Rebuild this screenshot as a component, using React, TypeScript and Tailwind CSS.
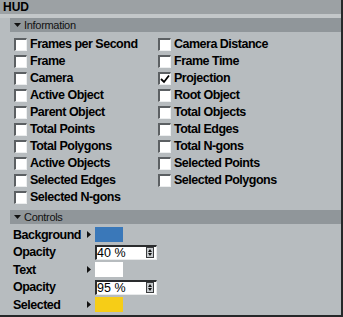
const left = [
  "Frames per Second",
  "Frame",
  "Camera",
  "Active Object",
  "Parent Object",
  "Total Points",
  "Total Polygons",
  "Active Objects",
  "Selected Edges",
  "Selected N-gons",
];

const right = [
  "Camera Distance",
  "Frame Time",
  "Projection",
  "Root Object",
  "Total Objects",
  "Total Edges",
  "Total N-gons",
  "Selected Points",
  "Selected Polygons",
];

const Check = ({ label, checked }: { label: string; checked?: boolean }) => (
  <div className="flex items-center h-[17px] gap-[3px]">
    <div className="w-[13px] h-[13px] bg-white border-t-2 border-l-2 border-[#5c6063] border-r border-b border-r-[#eceeef] border-b-[#eceeef] flex items-center justify-center shrink-0">
      {checked && (
        <svg width="10" height="10" viewBox="0 0 10 10">
          <path d="M1 5 L4 8 L9 1.5" stroke="#000" strokeWidth="1.8" fill="none" />
        </svg>
      )}
    </div>
    <span className="text-[12.5px] font-bold tracking-[-0.5px] text-black leading-none">{label}</span>
  </div>
);

const SectionHeader = ({ title }: { title: string }) => (
  <div className="ml-[10px] h-[14px] bg-[#90969a] flex items-center pl-[4px] gap-[3px]">
    <svg width="7" height="5" viewBox="0 0 7 5">
      <path d="M0 0 L7 0 L3.5 4 Z" fill="#111" />
    </svg>
    <span className="text-[11px] tracking-[-0.3px] text-[#111] leading-none">{title}</span>
  </div>
);

const Arrow = () => (
  <svg width="4" height="7" viewBox="0 0 4 7" className="shrink-0">
    <path d="M0 0 L4 3.5 L0 7 Z" fill="#111" />
  </svg>
);

const Swatch = ({ color }: { color: string }) => (
  <div className="w-[28px] h-[15px]" style={{ backgroundColor: color }} />
);

const Spinner = ({ value }: { value: string }) => (
  <div className="w-[62px] h-[15px] bg-white border-t-2 border-l-2 border-[#2a2c2e] border-r border-b border-r-[#e8eaeb] border-b-[#e8eaeb] flex items-center justify-between">
    <span className="text-[12.5px] leading-none text-black">{value}</span>
    <div className="w-[8px] h-[11px] mr-[2px] bg-[#c8cccf] border border-[#3a3c3e] flex flex-col items-center justify-center gap-[1px]">
      <svg width="4" height="3" viewBox="0 0 4 3">
        <path d="M0 3 L2 0 L4 3 Z" fill="#111" />
      </svg>
      <svg width="4" height="3" viewBox="0 0 4 3">
        <path d="M0 0 L4 0 L2 3 Z" fill="#111" />
      </svg>
    </div>
  </div>
);

const ControlRow = ({ label, arrow, children }: { label: string; arrow?: boolean; children: React.ReactNode }) => (
  <div className="flex items-center h-[17.5px]">
    <span className="w-[74px] text-[12.5px] font-bold tracking-[-0.5px] text-black leading-none">{label}</span>
    <div className="w-[8px] flex items-center">{arrow && <Arrow />}</div>
    {children}
  </div>
);

export default function App() {
  return (
    <div
      className="w-[343px] h-[317px] bg-[#b7bcbf] border-r-2 border-b-2 border-[#262829] flex flex-col overflow-hidden"
      style={{ fontFamily: '"Liberation Sans", Arial, sans-serif' }}
    >
      <div className="h-[14px] bg-[#9ca1a4] flex items-center pl-[3px]">
        <span className="text-[12px] font-bold text-black leading-none">HUD</span>
      </div>
      <div className="h-[4px] bg-[#c3c7c9]" />
      <SectionHeader title="Information" />

      <div className="flex pl-[14px] mt-[4px]">
        <div className="w-[144px] flex flex-col">
          {left.map((l) => (
            <Check key={l} label={l} />
          ))}
        </div>
        <div className="flex flex-col">
          {right.map((r) => (
            <Check key={r} label={r} checked={r === "Projection"} />
          ))}
        </div>
      </div>

      <div className="mt-[4px]">
        <SectionHeader title="Controls" />
      </div>

      <div className="flex flex-col pl-[13px] mt-[2px]">
        <ControlRow label="Background" arrow>
          <Swatch color="#3a78b9" />
        </ControlRow>
        <ControlRow label="Opacity">
          <Spinner value="40 %" />
        </ControlRow>
        <ControlRow label="Text" arrow>
          <Swatch color="#ffffff" />
        </ControlRow>
        <ControlRow label="Opacity">
          <Spinner value="95 %" />
        </ControlRow>
        <ControlRow label="Selected" arrow>
          <Swatch color="#f6cd17" />
        </ControlRow>
      </div>
    </div>
  );
}
